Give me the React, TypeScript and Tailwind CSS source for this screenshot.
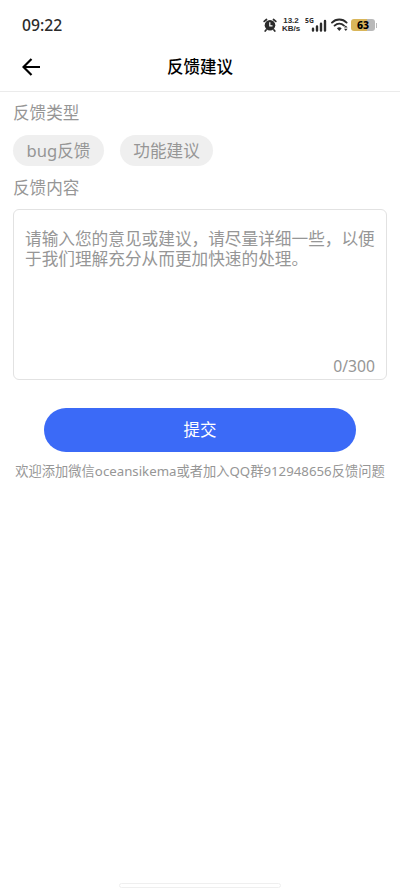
import { useState } from "react";

const types = ["bug反馈", "功能建议"];
const placeholder =
	"请输入您的意见或建议，请尽量详细一些，以便于我们理解充分从而更加快速的处理。";

function StatusBar() {
	return (
		<div className="flex h-[48px] shrink-0 items-center justify-between pl-[22px] pr-[23px] pt-[2px] text-[#2b2b2b]">
			<span className="pt-[2px] font-['Noto_Sans'] text-[15.7px] font-medium">
				09:22
			</span>
			<div className="flex items-center">
				<svg className="h-[14px] w-[14px]" viewBox="0 0 14 14" fill="none">
					<circle cx="7" cy="7.3" r="5.3" fill="#2b2b2b" />
					<path
						d="M1.2 3.4 3.5 1.5M12.8 3.4 10.5 1.5M3.2 11.8l-1 1.2M10.8 11.8l1 1.2"
						stroke="#2b2b2b"
						strokeWidth="1.7"
						strokeLinecap="round"
					/>
					<path d="M6.8 4.3v3.5h2.7" stroke="#fff" strokeWidth="1.2" />
				</svg>
				<div className="ml-[4px] flex w-[20px] flex-col items-center font-['Liberation_Sans'] font-bold">
					<span className="h-[8px] text-[8px] leading-[8px]">13.2</span>
					<span className="h-[8px] whitespace-nowrap text-[8px] leading-[8px]">
						KB/s
					</span>
				</div>
				<svg className="ml-[4px] h-[16px] w-[22px]" viewBox="0 0 22 16">
					<text
						x="0"
						y="6"
						fontSize="6.8"
						fontWeight="700"
						fontFamily="Noto Sans"
						fill="#2b2b2b"
					>
						5G
					</text>
					<path
						d="M8 11.7v1.8M12 9.5v4M16 6.7v6.8M20 4v9.5"
						stroke="#2b2b2b"
						strokeWidth="2.4"
						strokeLinecap="round"
					/>
				</svg>
				<svg className="ml-[4px] h-[14px] w-[18px]" viewBox="0 0 18 14" fill="none">
					<path
						d="M1 4.6c4-4.1 10.6-4.1 14.6 0M3.6 7.6c2.7-2.6 6.7-2.6 9.4 0"
						stroke="#2b2b2b"
						strokeWidth="1.9"
						strokeLinecap="round"
					/>
					<path
						d="M5.9 10.2c1.4-1.2 3.4-1.2 4.8 0L8.3 13zM13 9.6l1.8-2.2 1.8 2.2zM13 10.8l1.8 2.2 1.8-2.2z"
						fill="#2b2b2b"
					/>
				</svg>
				<div className="ml-[2px] flex h-[12px] w-[26px] items-center">
					<div className="flex h-[12px] w-[24px] items-center justify-center rounded-[3px] bg-linear-to-r from-[#d9b65a] from-65% to-[#b9b9b9] to-65% font-['Noto_Sans'] text-[10.5px] font-extrabold leading-none text-black">
						63
					</div>
					<div className="ml-px h-[5px] w-px bg-[#b9b9b9]" />
				</div>
			</div>
		</div>
	);
}

export default function App() {
	const [type, setType] = useState("");
	const [content, setContent] = useState("");

	return (
		<div className="flex h-[889px] w-full flex-col bg-white font-['Noto_Sans','Noto_Sans_CJK_SC',sans-serif] text-[#969696]">
			<StatusBar />
			<header className="grid h-[44px] shrink-0 grid-cols-[1fr_auto_1fr] items-center border-b border-[#ebebeb] pl-[22px] pr-[22px] pb-[6px]">
				<button type="button" aria-label="返回">
					<svg className="h-[18px] w-[19px]" viewBox="0 0 19 18" fill="none">
						<path
							d="M18 9H1.5M9.5 1 1.5 9l8 8"
							stroke="#000"
							strokeWidth="2.2"
						/>
					</svg>
				</button>
				<h1 className="text-[16.5px] font-medium leading-[24px] text-black">
					反馈建议
				</h1>
			</header>

			<form
				className="flex flex-col px-[13px] pt-[9px]"
				onSubmit={(e) => e.preventDefault()}
			>
				<label className="text-[16.6px] leading-[24px]">反馈类型</label>
				<div className="mt-[10px] flex gap-[16px]">
					{types.map((item) => (
						<button
							key={item}
							type="button"
							onClick={() => setType(item)}
							aria-pressed={type === item}
							className="h-[31px] rounded-full bg-[#efefef] px-[13.5px] text-[16.6px] leading-[31px]"
						>
							{item}
						</button>
					))}
				</div>
				<label className="mt-[10px] text-[16.6px] leading-[24px]">反馈内容</label>
				<div className="mt-[9px] flex h-[171px] flex-col rounded-[6px] border border-[#e2e2e2] px-[11px] pt-[19px] pb-[3px]">
					<textarea
						className="w-full flex-1 resize-none overflow-hidden text-[16.66px] leading-[20px] outline-none placeholder:text-[#969696]"
						placeholder={placeholder}
						maxLength={300}
						value={content}
						onChange={(e) => setContent(e.target.value)}
					/>
					<span className="text-right text-[15.7px] leading-[20px]">
						{content.length}/300
					</span>
				</div>
				<button className="mx-[31px] mt-[28px] h-[44px] rounded-full bg-[#3b6af7] text-[16.5px] leading-[44px] text-white">
					提交
				</button>
			</form>
			<p className="mt-[9px] whitespace-nowrap text-center text-[13.25px] leading-[20px]">
				欢迎添加微信oceansikema或者加入QQ群912948656反馈问题
			</p>

			<div className="mx-auto mt-auto mb-px h-[5px] w-[162px] rounded-full border border-[#efefef] bg-white" />
		</div>
	);
}
